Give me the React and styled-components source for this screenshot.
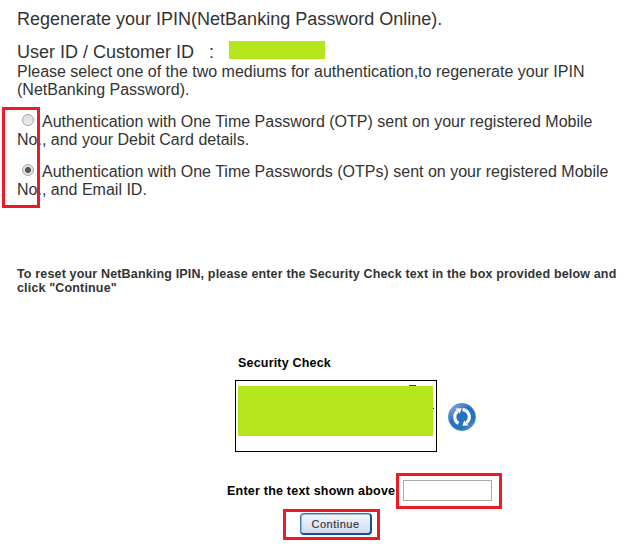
import React, { useState } from "react";
import styled, { createGlobalStyle, css } from "styled-components";

const GlobalStyle = createGlobalStyle`
  body {
    margin: 0;
    background: #fff;
    font-family: "Liberation Sans", Arial, sans-serif;
    overflow: hidden;
  }
`;

const Page = styled.main`
  position: relative;
  box-sizing: border-box;
  width: 631px;
  height: 545px;
  padding: 9px 0 0 17px;
  color: #333;
  white-space: nowrap;
`;

const Title = styled.h1`
  margin: 0 0 13px;
  font-size: 18px;
  font-weight: 400;
  line-height: 20px;
`;

const UserRow = styled.div`
  display: flex;
  height: 21px;
  font-size: 18px;
  line-height: 20px;
`;

const UserLabel = styled.span`
  width: 192px;
`;

const Redacted = styled.span`
  width: 96px;
  height: 18px;
  margin: -1px 0 0 15px;
  background: #b5e61d;
`;

const Paragraph = styled.p`
  margin: 0 0 14px;
  font-size: 16px;
  line-height: 18px;
`;

const Line = styled.span`
  display: block;
`;

const Option = styled.label`
  display: block;
  margin-bottom: 14px;
  font-size: 16px;
  line-height: 18px;
`;

const OptionFirst = styled.span`
  display: flex;
  height: 18px;
`;

const Radio = styled.input`
  appearance: none;
  box-sizing: border-box;
  flex: none;
  width: 12px;
  height: 12px;
  margin: 1px 8px 0 5px;
  border: 1px solid #a5a5a5;
  border-radius: 50%;
  background: linear-gradient(#dcdcdc, #eee);
  ${(p) =>
    p.checked &&
    css`
      background: radial-gradient(circle at center, #555 0 2.6px, #e4e4e4 3.4px);
    `}
`;

const Notice = styled.p`
  margin: 68px 0 0;
  font-size: 12.5px;
  font-weight: 700;
  line-height: 14px;
  letter-spacing: 0.16px;
`;

const CheckTitle = styled.h2`
  margin: 61px 0 10px 221px;
  color: #000;
  font-size: 12.5px;
  font-weight: 700;
  line-height: 14px;
  letter-spacing: 0.19px;
`;

const CaptchaRow = styled.div`
  display: flex;
  align-items: center;
  gap: 10px;
  margin-left: 218px;
`;

const Captcha = styled.div`
  position: relative;
  box-sizing: border-box;
  width: 202px;
  height: 72px;
  padding: 5px 2px;
  border: 1px solid #000;
`;

const CaptchaMask = styled.div`
  width: 195px;
  height: 50px;
  background: #b5e61d;
`;

const Speck = styled.i`
  position: absolute;
  left: ${(p) => p.$x}px;
  top: ${(p) => p.$y}px;
  width: ${(p) => p.$w}px;
  height: 1px;
  background: ${(p) => p.$tone};
`;

const RefreshButton = styled.button`
  display: flex;
  margin-top: 2px;
  padding: 0;
  border: 0;
  background: none;
`;

const EntryRow = styled.div`
  display: flex;
  align-items: flex-start;
  height: 21px;
  margin: 28px 0 12px 210px;
`;

const EntryLabel = styled.label`
  width: 176px;
  padding-top: 4px;
  color: #000;
  font-size: 12.5px;
  letter-spacing: 0.22px;
  font-weight: 700;
  line-height: 14px;
`;

const EntryInput = styled.input`
  box-sizing: border-box;
  width: 89px;
  height: 21px;
  padding: 1px;
  border: 1px solid #a9a9a9;
  background: #fff;
  outline: none;
`;

const ContinueButton = styled.button`
  display: block;
  box-sizing: border-box;
  width: 72px;
  height: 22px;
  margin-left: 283px;
  padding: 1px 0 0;
  border: 1px solid #3478b5;
  border-right: 2px solid #11519a;
  border-bottom: 2px solid #11519a;
  border-radius: 4px;
  background: linear-gradient(#f6f8fd, #cfd9ee);
  box-shadow: inset 1px 1px 0 #8fbce4;
  color: #333;
  font-family: inherit;
  font-size: 11px;
  line-height: 18px;
  letter-spacing: 0.5px;
  -webkit-text-stroke: 0.15px #333;
`;

const Highlight = styled.div`
  position: absolute;
  box-sizing: border-box;
  left: ${(p) => p.$x}px;
  top: ${(p) => p.$y}px;
  width: ${(p) => p.$w}px;
  height: ${(p) => p.$h}px;
  border: 3px solid #ed1c24;
  pointer-events: none;
`;

function RefreshIcon() {
  return (
    <svg width="30" height="30" viewBox="0 0 30 30">
      <defs>
        <linearGradient id="disc" x1="0" y1="0" x2="0.8" y2="1">
          <stop offset="0" stopColor="#b4bce4" />
          <stop offset="0.28" stopColor="#5e8acb" />
          <stop offset="0.45" stopColor="#2473bd" />
          <stop offset="0.8" stopColor="#2473bd" />
          <stop offset="1" stopColor="#6b97d0" />
        </linearGradient>
      </defs>
      <circle cx="15" cy="15" r="14.3" fill="#d9e0e8" />
      <circle cx="15" cy="15" r="13.4" fill="url(#disc)" stroke="#3e7fc1" strokeWidth="0.8" />
      <g fill="none" stroke="#fff" strokeWidth="3.2">
        <path d="M11.5 21.4A7.3 7.3 0 0 1 10.5 9.3" />
        <path d="M15.5 7.7A7.3 7.3 0 0 1 19.5 20.7" />
      </g>
      <path d="M8.5 6.6L14.6 6.2L12.8 11.6Z" fill="#fff" />
      <path d="M21.5 23.4L15.4 23.8L17.2 18.4Z" fill="#fff" />
    </svg>
  );
}

const OPTIONS = [
  {
    id: "card",
    first: "Authentication with One Time Password (OTP) sent on your registered Mobile",
    second: "No., and your Debit Card details.",
  },
  {
    id: "email",
    first: "Authentication with One Time Passwords (OTPs) sent on your registered Mobile",
    second: "No., and Email ID.",
  },
];

export default function App() {
  const [medium, setMedium] = useState("email");
  return (
    <>
      <GlobalStyle />
      <Page>
        <Title>Regenerate your IPIN(NetBanking Password Online).</Title>
        <UserRow>
          <UserLabel>User ID / Customer ID</UserLabel>
          <span>:</span>
          <Redacted />
        </UserRow>
        <Paragraph>
          <Line>Please select one of the two mediums for authentication,to regenerate your IPIN</Line>
          <Line>(NetBanking Password).</Line>
        </Paragraph>
        {OPTIONS.map((o) => (
          <Option key={o.id}>
            <OptionFirst>
              <Radio
                type="radio"
                name="medium"
                checked={medium === o.id}
                onChange={() => setMedium(o.id)}
              />
              <Line>{o.first}</Line>
            </OptionFirst>
            <Line>{o.second}</Line>
          </Option>
        ))}
        <Notice>
          <Line>
            To reset your NetBanking IPIN, please enter the Security Check text in the box provided
            below and
          </Line>
          <Line>click "Continue"</Line>
        </Notice>
        <CheckTitle>Security Check</CheckTitle>
        <CaptchaRow>
          <Captcha>
            <CaptchaMask />
            <Speck $x={173} $y={4} $w={7} $tone="#444" />
            <Speck $x={197} $y={27} $w={1} $tone="#000" />
          </Captcha>
          <RefreshButton type="button" aria-label="Refresh">
            <RefreshIcon />
          </RefreshButton>
        </CaptchaRow>
        <EntryRow>
          <EntryLabel htmlFor="entry">Enter the text shown above</EntryLabel>
          <EntryInput id="entry" />
        </EntryRow>
        <ContinueButton type="button">Continue</ContinueButton>
        <Highlight $x={2} $y={107} $w={38} $h={101} />
        <Highlight $x={396} $y={473} $w={106} $h={36} />
        <Highlight $x={283} $y={509} $w={97} $h={31} />
      </Page>
    </>
  );
}
